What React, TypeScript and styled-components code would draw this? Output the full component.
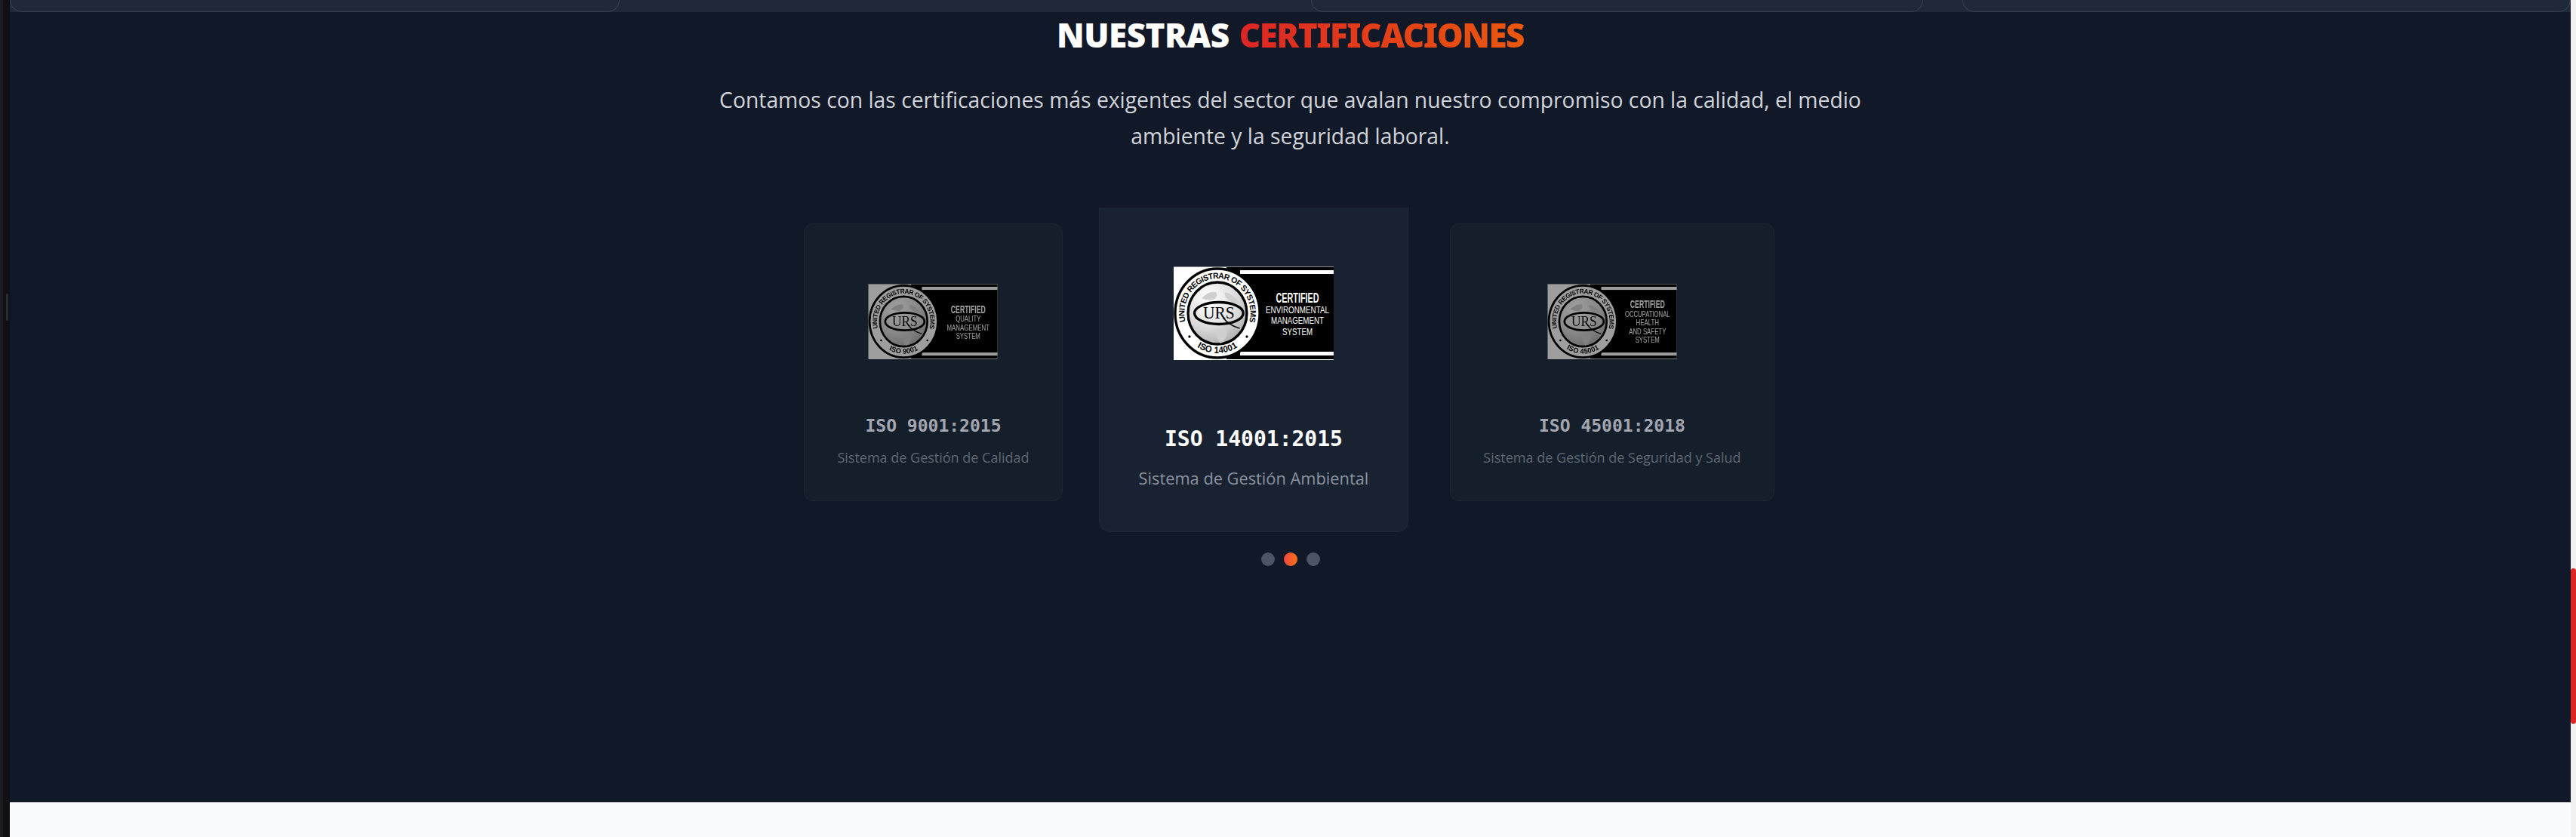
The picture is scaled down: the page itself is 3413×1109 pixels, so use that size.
import styled, { createGlobalStyle } from "styled-components"

const GlobalStyle = createGlobalStyle`
    html, body {
        margin: 0;
        padding: 0;
        background: #0f0f14;
        overflow: hidden;
    }
`

interface SealLine {
    text: string
    width: number
}

interface Certification {
    name: string
    system: string
    seal: string
    lines: SealLine[]
    firstBaseline: number
    active?: boolean
}

const certifications: Certification[] = [
    {
        name: "ISO 9001:2015",
        system: "Sistema de Gestión de Calidad",
        seal: "ISO 9001",
        firstBaseline: 48,
        lines: [
            { text: "QUALITY", width: 41 },
            { text: "MANAGEMENT", width: 70 },
            { text: "SYSTEM", width: 40 }
        ]
    },
    {
        name: "ISO 14001:2015",
        system: "Sistema de Gestión Ambiental",
        seal: "ISO 14001",
        firstBaseline: 48,
        active: true,
        lines: [
            { text: "ENVIRONMENTAL", width: 84 },
            { text: "MANAGEMENT", width: 70 },
            { text: "SYSTEM", width: 40 }
        ]
    },
    {
        name: "ISO 45001:2018",
        system: "Sistema de Gestión de Seguridad y Salud",
        seal: "ISO 45001",
        firstBaseline: 40,
        lines: [
            { text: "OCCUPATIONAL", width: 74 },
            { text: "HEALTH", width: 38 },
            { text: "AND SAFETY", width: 61 },
            { text: "SYSTEM", width: 40 }
        ]
    }
]

const UrsSeal = ({ cert, id }: { cert: Certification; id: string }) => (
    <SealSvg viewBox="0 0 212 124" $active={cert.active}>
        <defs>
            <radialGradient id={`${id}-globe`} cx="35%" cy="25%" r="85%">
                <stop offset="0%" stopColor="#ffffff" />
                <stop offset="55%" stopColor="#dcdcdc" />
                <stop offset="100%" stopColor="#a8a8a8" />
            </radialGradient>
            <path id={`${id}-top`} d="M 14.25 76.2 A 46 46 0 1 1 101.75 76.2" />
            <path id={`${id}-bottom`} d="M 8.2 80.1 A 53 53 0 0 0 107.8 80.1" />
        </defs>
        <rect width="212" height="124" fill="#ffffff" />
        <rect width="212" height="1" fill="#8a8a8a" />
        <rect x="70" y="1" width="142" height="122" fill="#000000" />
        <rect x="88" y="5" width="124" height="5" fill="#ffffff" />
        <rect x="88" y="113" width="124" height="5" fill="#ffffff" />
        <g transform="translate(58 62) scale(0.95 1) translate(-58 -62)">
            <circle cx="58" cy="62" r="59" fill="#ffffff" stroke="#000000" strokeWidth="3.5" />
            <circle cx="58" cy="62" r="41" fill={`url(#${id}-globe)`} stroke="#000000" strokeWidth="3.5" />
            <path d="M 36 42 q 10 -10 20 -8 q 4 6 -4 10 q -8 2 -16 -2 z M 68 34 q 12 2 20 14 q -8 2 -12 -2 q -8 -4 -8 -12 z M 56 84 q 12 -4 16 2 q -2 12 -10 16 q -6 -8 -6 -18 z" fill="#cfcfcf" />
            <ellipse cx="60" cy="62" rx="34" ry="14.5" fill="#ffffff" fillOpacity="0.2" stroke="#000000" strokeWidth="3.5" />
            <path d="M 66 68 Q 74 78 89 82" fill="none" stroke="#000000" strokeWidth="1.8" />
            <SealInitials x="60" y="69" textLength="44" lengthAdjust="spacingAndGlyphs">URS</SealInitials>
            <SealRingText fontSize="11" letterSpacing="-0.6">
                <textPath href={`#${id}-top`} startOffset="50%" textAnchor="middle">UNITED REGISTRAR OF SYSTEMS</textPath>
            </SealRingText>
            <SealRingText fontSize="12" letterSpacing="0.3">
                <textPath href={`#${id}-bottom`} startOffset="50%" textAnchor="middle">{cert.seal}</textPath>
            </SealRingText>
            <circle cx="19" cy="93" r="1.7" fill="#000000" />
            <circle cx="99" cy="93" r="1.7" fill="#000000" />
        </g>
        <SealCertified x="164" y={cert.firstBaseline} textLength="57" lengthAdjust="spacingAndGlyphs">CERTIFIED</SealCertified>
        {cert.lines.map((line, index) => (
            <SealLineText
                key={line.text}
                x="164"
                y={cert.firstBaseline + 14.2 * (index + 1)}
                textLength={line.width}
                lengthAdjust="spacingAndGlyphs"
            >
                {line.text}
            </SealLineText>
        ))}
    </SealSvg>
)

export default function App() {
    return (
        <>
            <GlobalStyle />
            <Page>
                <LeftRail>
                    <RailHandle />
                </LeftRail>
                <Main>
                    <TopStrip>
                        <StripCard />
                        <StripCard $plain />
                        <StripCard />
                        <StripCard />
                    </TopStrip>
                    <CertSection>
                        <Heading>NUESTRAS <span>CERTIFICACIONES</span></Heading>
                        <Intro>
                            Contamos con las certificaciones más exigentes del sector que avalan nuestro compromiso con la calidad, el medio ambiente y la seguridad laboral.
                        </Intro>
                        <Track>
                            {certifications.map((cert, index) => (
                                <Card key={cert.name} $active={cert.active}>
                                    <UrsSeal cert={cert} id={`seal-${index}`} />
                                    <CertName $active={cert.active}>{cert.name}</CertName>
                                    <CertSystem $active={cert.active}>{cert.system}</CertSystem>
                                </Card>
                            ))}
                        </Track>
                        <Dots>
                            {certifications.map(cert => (
                                <Dot key={cert.name} $active={cert.active} />
                            ))}
                        </Dots>
                    </CertSection>
                    <NextSection />
                </Main>
                <ScrollTrack>
                    <ScrollThumb />
                </ScrollTrack>
            </Page>
        </>
    )
}

const Page = styled.div`
    display: flex;
    width: 3413px;
    height: 1109px;
    overflow: hidden;
    font-family: "Open Sans", "Noto Sans", sans-serif;
`

const LeftRail = styled.aside`
    position: relative;
    flex: 0 0 13px;
    box-sizing: border-box;
    border-left: 4px solid #1a1a20;
    background: #0f0f14;
`

const RailHandle = styled.div`
    position: absolute;
    top: 389px;
    left: 4px;
    width: 3px;
    height: 36px;
    border-radius: 2px;
    background: #2b2b33;
`

const Main = styled.main`
    flex: 1;
    display: flex;
    flex-direction: column;
    min-width: 0;
`

const TopStrip = styled.div`
    flex: 0 0 16px;
    display: grid;
    grid-template-columns: 808px 812px 811px 806px;
    column-gap: 52px;
    background: #1f2937;
    overflow: hidden;
`

const StripCard = styled.div<{ $plain?: boolean }>`
    box-sizing: border-box;
    height: 16px;
    border: 1px solid ${p => (p.$plain ? "transparent" : "#374151")};
    border-top: none;
    border-radius: 0 0 18px 18px;
`

const CertSection = styled.section`
    flex: 1;
    display: flex;
    flex-direction: column;
    align-items: center;
    padding-top: 14px;
    background: #111827;
`

const Heading = styled.h2`
    margin: 0;
    font-family: "Noto Sans", "Open Sans", sans-serif;
    font-size: 44px;
    line-height: 32px;
    font-weight: 900;
    letter-spacing: -0.5px;
    word-spacing: 2px;
    color: #ffffff;

    span {
        letter-spacing: -1.5px;
        background: linear-gradient(90deg, #dc2626, #ea580c);
        -webkit-background-clip: text;
        background-clip: text;
        color: transparent;
    }
`

const Intro = styled.p`
    width: 1536px;
    margin: 46px 0 0;
    font-size: 28.3px;
    font-weight: 400;
    line-height: 48px;
    text-align: center;
    color: #d1d5db;
`

const Track = styled.div`
    box-sizing: border-box;
    display: flex;
    align-items: flex-start;
    justify-content: center;
    gap: 48px;
    width: 100%;
    height: 430px;
    margin-top: 71px;
    padding-right: 3px;
    overflow: hidden;
`

const Card = styled.article<{ $active?: boolean }>`
    box-sizing: border-box;
    display: flex;
    flex-direction: column;
    align-items: center;
    margin: ${p => (p.$active ? "-20px 7px 0 0" : "21px 0 0")};
    height: ${p => (p.$active ? "450px" : "368px")};
    padding: ${p => (p.$active ? "97px 52px 0" : "79px 43px 0")};
    border: 1px solid ${p => (p.$active ? "#1f2937" : "#1b2533")};
    border-radius: ${p => (p.$active ? "14px" : "12px")};
    background: ${p => (p.$active ? "#192230" : "#151f2c")};
`

const SealSvg = styled.svg<{ $active?: boolean }>`
    flex: none;
    width: ${p => (p.$active ? "212px" : "174px")};
    height: ${p => (p.$active ? "124px" : "100px")};
    filter: ${p => (p.$active ? "none" : "brightness(0.62)")};
`

const SealInitials = styled.text`
    font-family: "Liberation Serif", serif;
    font-size: 23px;
    text-anchor: middle;
    fill: #000000;
`

const SealRingText = styled.text`
    font-family: "Liberation Sans", sans-serif;
    font-weight: 700;
    fill: #000000;
`

const SealCertified = styled.text`
    font-family: "Liberation Sans", sans-serif;
    font-size: 18px;
    font-weight: 700;
    text-anchor: middle;
    fill: #ffffff;
`

const SealLineText = styled.text`
    font-family: "Liberation Sans", sans-serif;
    font-size: 13px;
    text-anchor: middle;
    fill: #ffffff;
`

const CertName = styled.h3<{ $active?: boolean }>`
    margin: ${p => (p.$active ? "93px 0 0" : "78px 0 0")};
    font-family: "DejaVu Sans Mono", "Liberation Mono", monospace;
    font-size: ${p => (p.$active ? "28px" : "23px")};
    font-weight: 700;
    line-height: ${p => (p.$active ? "24px" : "20px")};
    color: ${p => (p.$active ? "#ffffff" : "#a3a6af")};
`

const CertSystem = styled.p<{ $active?: boolean }>`
    margin: ${p => (p.$active ? "25px 0 0" : "19px 0 0")};
    font-size: ${p => (p.$active ? "21.8px" : "18px")};
    line-height: ${p => (p.$active ? "30px" : "26px")};
    white-space: nowrap;
    color: ${p => (p.$active ? "#8b93a1" : "#5f6672")};
`

const Dots = styled.div`
    display: flex;
    gap: 12px;
    margin-top: 27px;
`

const Dot = styled.span<{ $active?: boolean }>`
    width: 18px;
    height: 18px;
    border-radius: 50%;
    background: ${p => (p.$active ? "linear-gradient(90deg, #ef4444, #f97316)" : "#4b5563")};
`

const NextSection = styled.div`
    flex: 0 0 46px;
    background: #fafbfd;
`

const ScrollTrack = styled.div`
    position: relative;
    flex: 0 0 7px;
    background: #f1f1f1;
`

const ScrollThumb = styled.div`
    position: absolute;
    top: 753px;
    left: 0;
    width: 7px;
    height: 206px;
    border-radius: 4px;
    background: #dc2626;
`
